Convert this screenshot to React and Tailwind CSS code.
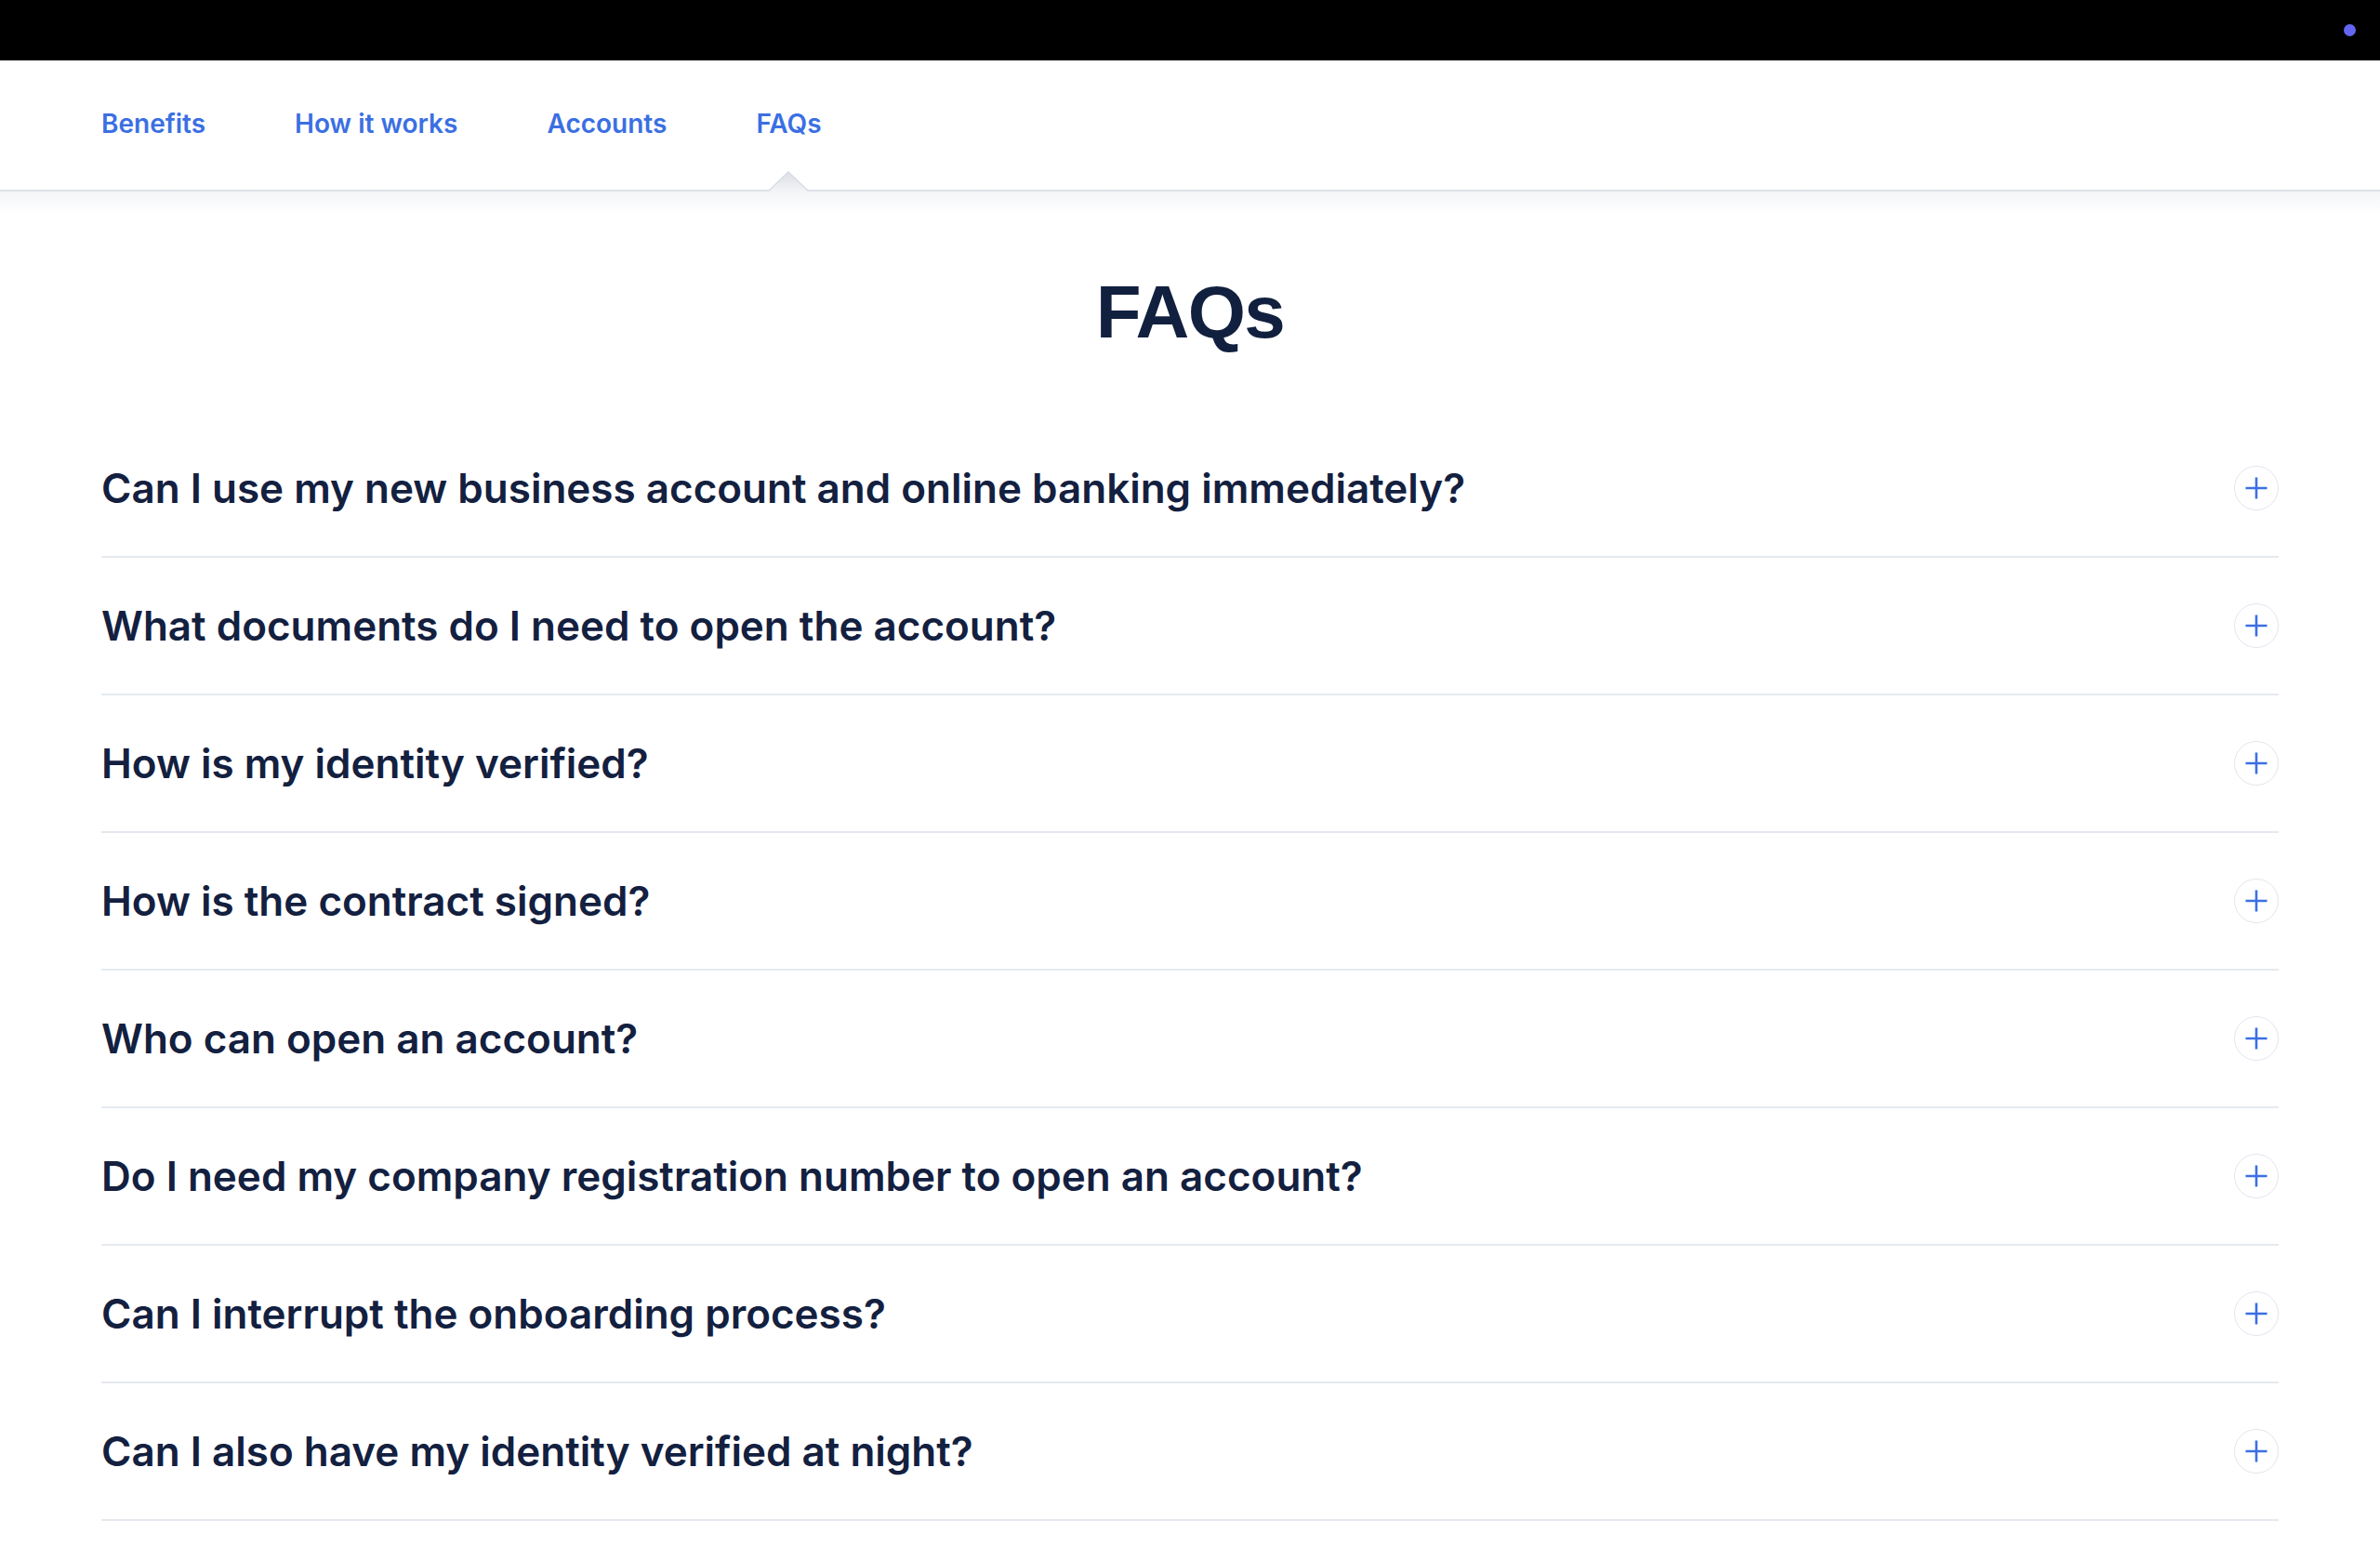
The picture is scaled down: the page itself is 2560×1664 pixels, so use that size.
import React from 'react'

const links = ['Benefits', 'How it works', 'Accounts', 'FAQs']

const questions = [
  'Can I use my new business account and online banking immediately?',
  'What documents do I need to open the account?',
  'How is my identity verified?',
  'How is the contract signed?',
  'Who can open an account?',
  'Do I need my company registration number to open an account?',
  'Can I interrupt the onboarding process?',
  'Can I also have my identity verified at night?',
]

function PlusIcon() {
  return (
    <div className="w-[48px] h-[48px] rounded-full border-[1.5px] border-[#e1e6ee] flex items-center justify-center shrink-0">
      <svg width="24" height="24" viewBox="0 0 24 24">
        <path d="M12 0.5v23M0.5 12h23" stroke="#3b6fe3" strokeWidth="2.6" fill="none" />
      </svg>
    </div>
  )
}

function FaqRow({ question }) {
  return (
    <div className="flex items-center justify-between h-[148px] border-b-2 border-[#e5e9ef]">
      <h3 className="text-[44px] font-semibold text-[#13203f]">{question}</h3>
      <PlusIcon />
    </div>
  )
}

export default function App() {
  return (
    <div className="min-h-screen bg-white" style={{ fontFamily: 'Inter, "Noto Sans", sans-serif' }}>
      <div className="h-[65px] bg-black flex items-center justify-end pr-[26px]">
        <div className="w-[13px] h-[13px] rounded-full bg-[#6466f1]" />
      </div>

      <nav className="h-[141px] border-b-2 border-[#dde1e7] flex px-[109px] gap-[96px]">
        {links.map((link) => (
          <div key={link} className="relative h-full flex items-center pb-[3px]">
            <a className="text-[28px] font-semibold text-[#3b6fe3]">{link}</a>
            {link === 'FAQs' && (
              <svg
                className="absolute left-1/2 -translate-x-1/2 bottom-[-3px]"
                width="44"
                height="23"
                viewBox="0 0 44 23"
              >
                <defs>
                  <linearGradient id="tri" x1="0" y1="0" x2="0" y2="1">
                    <stop offset="0" stopColor="#dcdfe5" />
                    <stop offset="1" stopColor="#f4f5f7" />
                  </linearGradient>
                </defs>
                <path d="M0 23 L22 1 L44 23 Z" fill="url(#tri)" />
                <path d="M1 21 L22 1 L43 21" stroke="#d8dce3" strokeWidth="1.5" fill="none" />
              </svg>
            )}
          </div>
        ))}
      </nav>
      <div className="h-[24px] bg-gradient-to-b from-[#f4f5f7] to-white" />

      <h1
        className="text-center text-[80px] leading-none font-bold text-[#12203f] tracking-[-0.02em] mt-[66px]"
        style={{ fontFamily: '"Liberation Sans", Arial, sans-serif' }}
      >
        FAQs
      </h1>

      <div className="px-[109px] mt-[76px]">
        {questions.map((q) => (
          <FaqRow key={q} question={q} />
        ))}
      </div>
    </div>
  )
}
